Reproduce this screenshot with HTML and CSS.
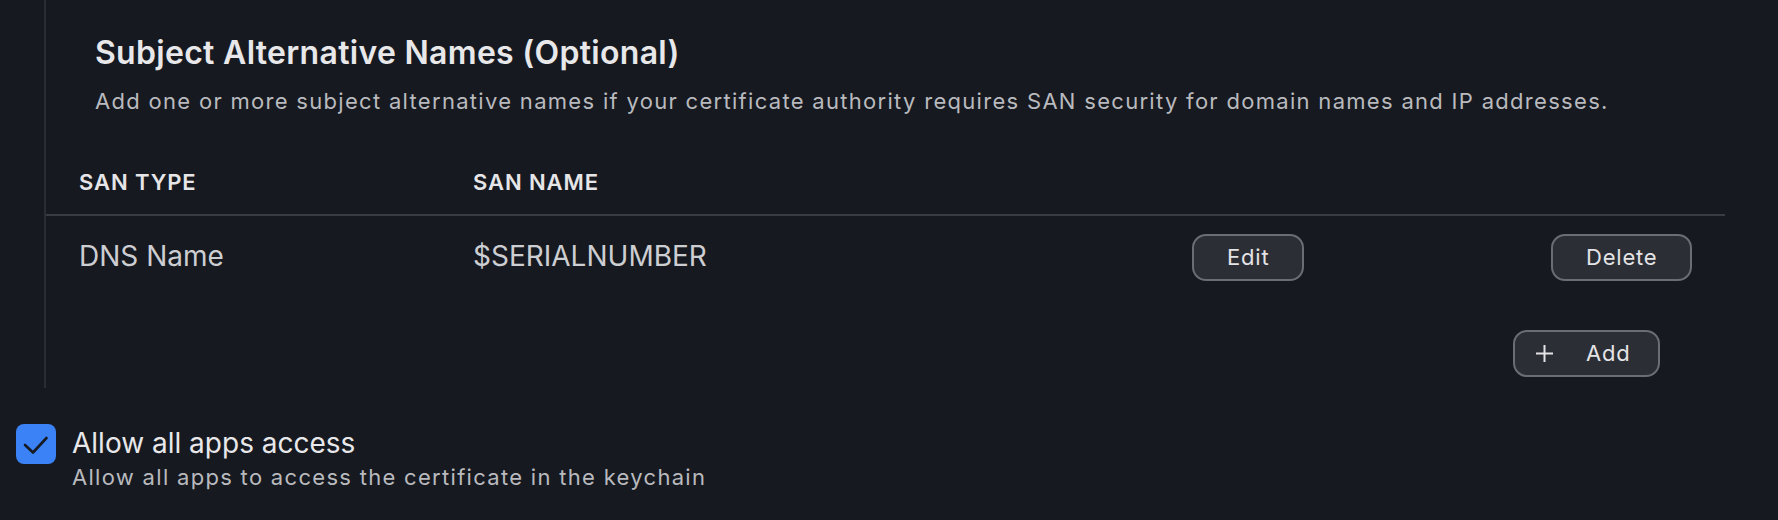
FILE: index.html
```html
<!DOCTYPE html>
<html>
<head>
<meta charset="utf-8">
<link rel="stylesheet" href="styles.css">
</head>
<body>
<div class="section">
  <h2 class="title">Subject Alternative Names (Optional)</h2>
  <p class="desc">Add one or more subject alternative names if your certificate authority requires SAN security for domain names and IP addresses.</p>
  <div class="table">
    <div class="row head">
      <div class="cell">SAN TYPE</div>
      <div class="cell">SAN NAME</div>
      <div class="cell"></div>
      <div class="cell"></div>
    </div>
    <div class="row body">
      <div class="cell">DNS Name</div>
      <div class="cell">$SERIALNUMBER</div>
      <div class="cell"><button class="btn">Edit</button></div>
      <div class="cell"><button class="btn">Delete</button></div>
    </div>
  </div>
  <div class="add-row">
    <button class="btn add">
      <svg class="plus" width="19" height="19" viewBox="0 0 19 19"><path d="M9.5 1v17M1 9.5h17" stroke="#e4e4e6" stroke-width="2" fill="none"/></svg>
      <span>Add</span>
    </button>
  </div>
</div>
<div class="check-row">
  <div class="checkbox">
    <svg width="40" height="40" viewBox="0 0 40 40"><path d="M9 21l8 7.5L30.5 14" stroke="#161a21" stroke-width="2.6" fill="none" stroke-linecap="round" stroke-linejoin="round"/></svg>
  </div>
  <div class="check-text">
    <div class="check-title">Allow all apps access</div>
    <div class="check-sub">Allow all apps to access the certificate in the keychain</div>
  </div>
</div>
</body>
</html>
```

FILE: styles.css
```css
html, body {
  margin: 0;
  padding: 0;
  background: #161920;
  font-family: Inter, "Noto Sans", sans-serif;
  color: #e6e6e8;
  height: 520px;
  overflow: hidden;
}

.section {
  margin-left: 44px;
  border-left: 2px solid #2a2d33;
  padding-top: 35px;
  padding-bottom: 11px;
  width: 1679px;
}

.title {
  margin: 0 0 0 49px;
  font-size: 32px;
  line-height: 36px;
  font-weight: 600;
  letter-spacing: 0.3px;
  color: #e8e8ea;
}

.desc {
  margin: 16px 0 0 49px;
  font-size: 22px;
  line-height: 28px;
  letter-spacing: 1.3px;
  color: #b9babe;
}

.table {
  margin-top: 55px;
}

.row {
  display: grid;
  grid-template-columns: 394px 719px 359px auto;
  padding: 0 32px 0 33px;
  align-items: center;
}

.row.head {
  font-size: 22px;
  line-height: 24px;
  font-weight: 600;
  letter-spacing: 0.9px;
  color: #e6e6e8;
  padding-bottom: 20px;
  border-bottom: 2px solid #393c42;
}

.row.body {
  padding-top: 16px;
  font-size: 28px;
  line-height: 47px;
  color: #cdced2;
}

.btn {
  box-sizing: border-box;
  height: 47px;
  padding: 0 33px;
  border: 2px solid #6a6d73;
  border-radius: 14px;
  background: #2b2e35;
  color: #e4e4e6;
  font-family: Inter, "Noto Sans", sans-serif;
  font-size: 22px;
  letter-spacing: 0.8px;
  line-height: 43px;
  display: inline-flex;
  align-items: center;
}

.add-row {
  display: flex;
  justify-content: flex-end;
  padding-right: 65px;
  margin-top: 49px;
}

.btn.add {
  width: 147px;
  padding: 0 0 0 20px;
  gap: 32px;
}

.plus {
  display: block;
}

.check-row {
  display: flex;
  align-items: flex-start;
  gap: 16px;
  margin: 36px 0 0 16px;
}

.checkbox {
  width: 40px;
  height: 40px;
  border-radius: 8px;
  background: #3b82f6;
  flex: none;
}

.checkbox svg {
  display: block;
}

.check-text {
  margin-top: 4px;
}

.check-title {
  font-size: 28px;
  line-height: 30px;
  color: #e8e8ea;
}

.check-sub {
  margin-top: 5px;
  font-size: 22px;
  line-height: 28px;
  letter-spacing: 1.3px;
  color: #b9babe;
}
```
